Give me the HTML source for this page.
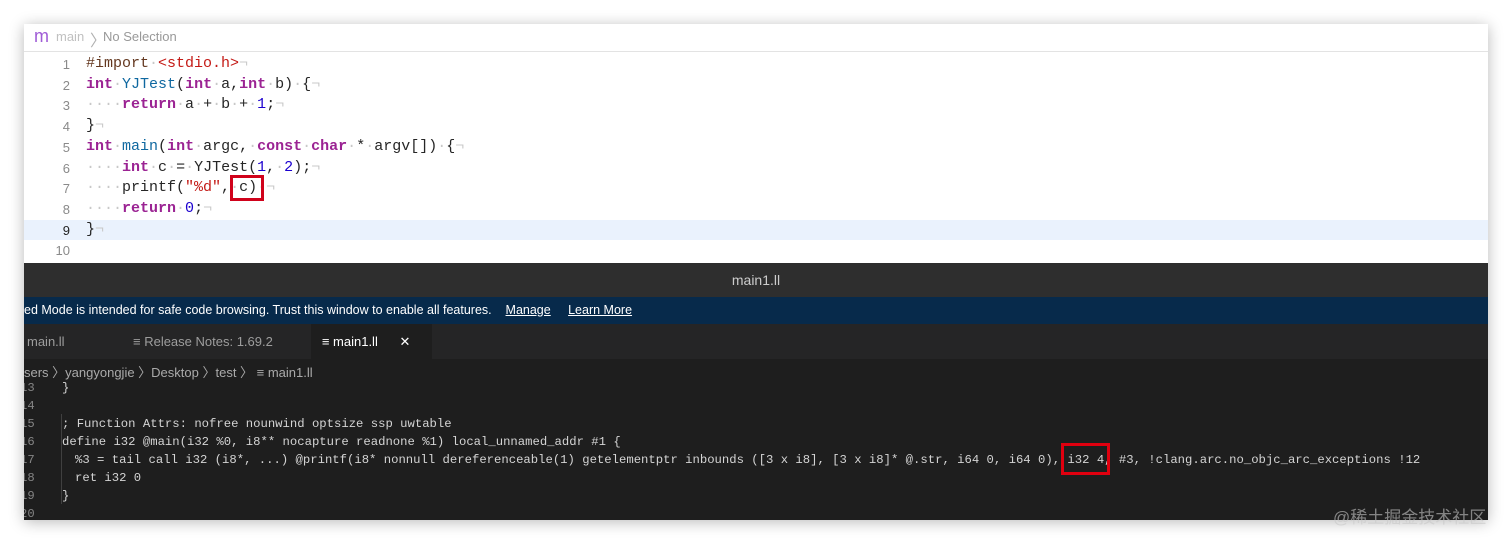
<!DOCTYPE html>
<html><head><meta charset="utf-8"><style>
body{margin:0;width:1512px;height:545px;background:#fff;position:relative;overflow:hidden;font-family:"Liberation Sans",sans-serif}
.win{position:absolute;left:24px;top:24px;width:1464px;height:496px;box-shadow:0 2px 14px rgba(0,0,0,.28);overflow:hidden;background:#1e1e1e}
.top{position:absolute;left:0;top:0;width:1464px;height:239px;background:#fff}
.hdr{position:absolute;left:0;top:0;width:1464px;height:27px;border-bottom:1px solid #e3e3e3;font-size:13px;color:#a0a0a0}
.mono{font-family:"Liberation Mono",monospace;white-space:pre}
.ln{position:absolute;left:0;width:46px;text-align:right;font-size:13px;color:#8a8a8a;font-family:"Liberation Sans",sans-serif}
.cl{position:absolute;left:62px;font-size:15px;color:#262626}
.k{color:#9b2393;font-weight:bold}.f{color:#0f68a0}.s{color:#c41a16}.n{color:#1c00cf}.d{color:#c8c8c8}.p{color:#643820}
.dark .dl{position:absolute;font-size:12.25px;color:#d4d4d4;font-family:"Liberation Mono",monospace;white-space:pre}
.dn{position:absolute;left:-4px;font-size:12.2px;color:#858585;font-family:"Liberation Mono",monospace}
</style></head><body>
<div class="win">
 <div class="top">
  <div class="hdr"><span style="position:absolute;left:10px;top:2px;font-size:18px;color:#a05cd6">m</span><span style="position:absolute;left:32px;top:5px;color:#c0c0c0">main</span><span style="position:absolute;left:66px;top:3px;color:#b0b0b0;font-size:16px">〉</span><span style="position:absolute;left:79px;top:5px;color:#999">No Selection</span></div>
  <div style="position:absolute;left:0;top:196px;width:1464px;height:20px;background:#eaf2fd"></div>
  <div class="ln" style="top:33px">1</div><div class="cl mono" style="top:31px"><span class="p">#import</span><span class="d">·</span><span class="s">&lt;stdio.h&gt;</span><span class="d">¬</span></div>
  <div class="ln" style="top:54px">2</div><div class="cl mono" style="top:52px"><span class="k">int</span><span class="d">·</span><span class="f">YJTest</span>(<span class="k">int</span><span class="d">·</span>a,<span class="k">int</span><span class="d">·</span>b)<span class="d">·</span>{<span class="d">¬</span></div>
  <div class="ln" style="top:74px">3</div><div class="cl mono" style="top:72px"><span class="d">····</span><span class="k">return</span><span class="d">·</span>a<span class="d">·</span>+<span class="d">·</span>b<span class="d">·</span>+<span class="d">·</span><span class="n">1</span>;<span class="d">¬</span></div>
  <div class="ln" style="top:95px">4</div><div class="cl mono" style="top:93px">}<span class="d">¬</span></div>
  <div class="ln" style="top:116px">5</div><div class="cl mono" style="top:114px"><span class="k">int</span><span class="d">·</span><span class="f">main</span>(<span class="k">int</span><span class="d">·</span>argc,<span class="d">·</span><span class="k">const</span><span class="d">·</span><span class="k">char</span><span class="d">·</span>*<span class="d">·</span>argv[])<span class="d">·</span>{<span class="d">¬</span></div>
  <div class="ln" style="top:137px">6</div><div class="cl mono" style="top:135px"><span class="d">····</span><span class="k">int</span><span class="d">·</span>c<span class="d">·</span>=<span class="d">·</span>YJTest(<span class="n">1</span>,<span class="d">·</span><span class="n">2</span>);<span class="d">¬</span></div>
  <div class="ln" style="top:157px">7</div><div class="cl mono" style="top:155px"><span class="d">····</span>printf(<span class="s">"%d"</span>,<span class="d">·</span>c)<span class="d">·¬</span></div>
  <div class="ln" style="top:178px">8</div><div class="cl mono" style="top:176px"><span class="d">····</span><span class="k">return</span><span class="d">·</span><span class="n">0</span>;<span class="d">¬</span></div>
  <div class="ln" style="top:199px;color:#222">9</div><div class="cl mono" style="top:197px">}<span class="d">¬</span></div>
  <div class="ln" style="top:219px">10</div>
  <div style="position:absolute;left:206px;top:151px;width:28px;height:20px;border:3px solid #d0021b"></div>
 </div>
 <div class="dark">
  <div style="position:absolute;left:0;top:239px;width:1464px;height:34px;background:#2e2e2e;color:#ccc;font-size:14px;text-align:center;line-height:34px">main1.ll</div>
  <div style="position:absolute;left:0;top:273px;width:1464px;height:27px;background:#072a4b;color:#fff;font-size:12.5px;line-height:27px;white-space:pre">ed Mode is intended for safe code browsing. Trust this window to enable all features.    <u>Manage</u>     <u>Learn More</u></div>
  <div style="position:absolute;left:0;top:300px;width:1464px;height:35px;background:#252526;font-size:13px;line-height:35px;color:#9d9d9d;white-space:pre"><span style="position:absolute;left:3px">main.ll</span><span style="position:absolute;left:109px">≡ Release Notes: 1.69.2</span><span style="position:absolute;left:287px;width:121px;height:35px;background:#1e1e1e;color:#fff">   ≡ main1.ll      ✕</span></div>
  <div style="position:absolute;left:0;top:338px;font-size:13px;color:#aaa;white-space:pre">sers 〉yangyongjie 〉Desktop 〉test 〉 ≡ main1.ll</div>
  <div class="dn" style="top:357px">13</div><div class="dl" style="left:38px;top:357px">}</div>
  <div class="dn" style="top:375px">14</div>
  <div class="dn" style="top:393px">15</div><div class="dl" style="left:38px;top:393px">; Function Attrs: nofree nounwind optsize ssp uwtable</div>
  <div class="dn" style="top:411px">16</div><div class="dl" style="left:38px;top:411px">define i32 @main(i32 %0, i8** nocapture readnone %1) local_unnamed_addr #1 {</div>
  <div class="dn" style="top:429px">17</div><div class="dl" style="left:51px;top:429px">%3 = tail call i32 (i8*, ...) @printf(i8* nonnull dereferenceable(1) getelementptr inbounds ([3 x i8], [3 x i8]* @.str, i64 0, i64 0), i32 4, #3, !clang.arc.no_objc_arc_exceptions !12</div>
  <div class="dn" style="top:447px">18</div><div class="dl" style="left:51px;top:447px">ret i32 0</div>
  <div class="dn" style="top:465px">19</div><div class="dl" style="left:38px;top:465px">}</div>
  <div class="dn" style="top:483px">20</div>
  <div style="position:absolute;left:37px;top:390px;width:1px;height:90px;background:#404040"></div>
  <div style="position:absolute;left:1037px;top:419px;width:43px;height:26px;border:3px solid #e0000f"></div>
 </div>
</div>
<div style="position:absolute;left:1333px;top:503px;font-size:17px;color:rgba(200,200,200,.6);font-family:'Liberation Sans','Noto Sans CJK SC',sans-serif">@稀土掘金技术社区</div>
</body></html>
